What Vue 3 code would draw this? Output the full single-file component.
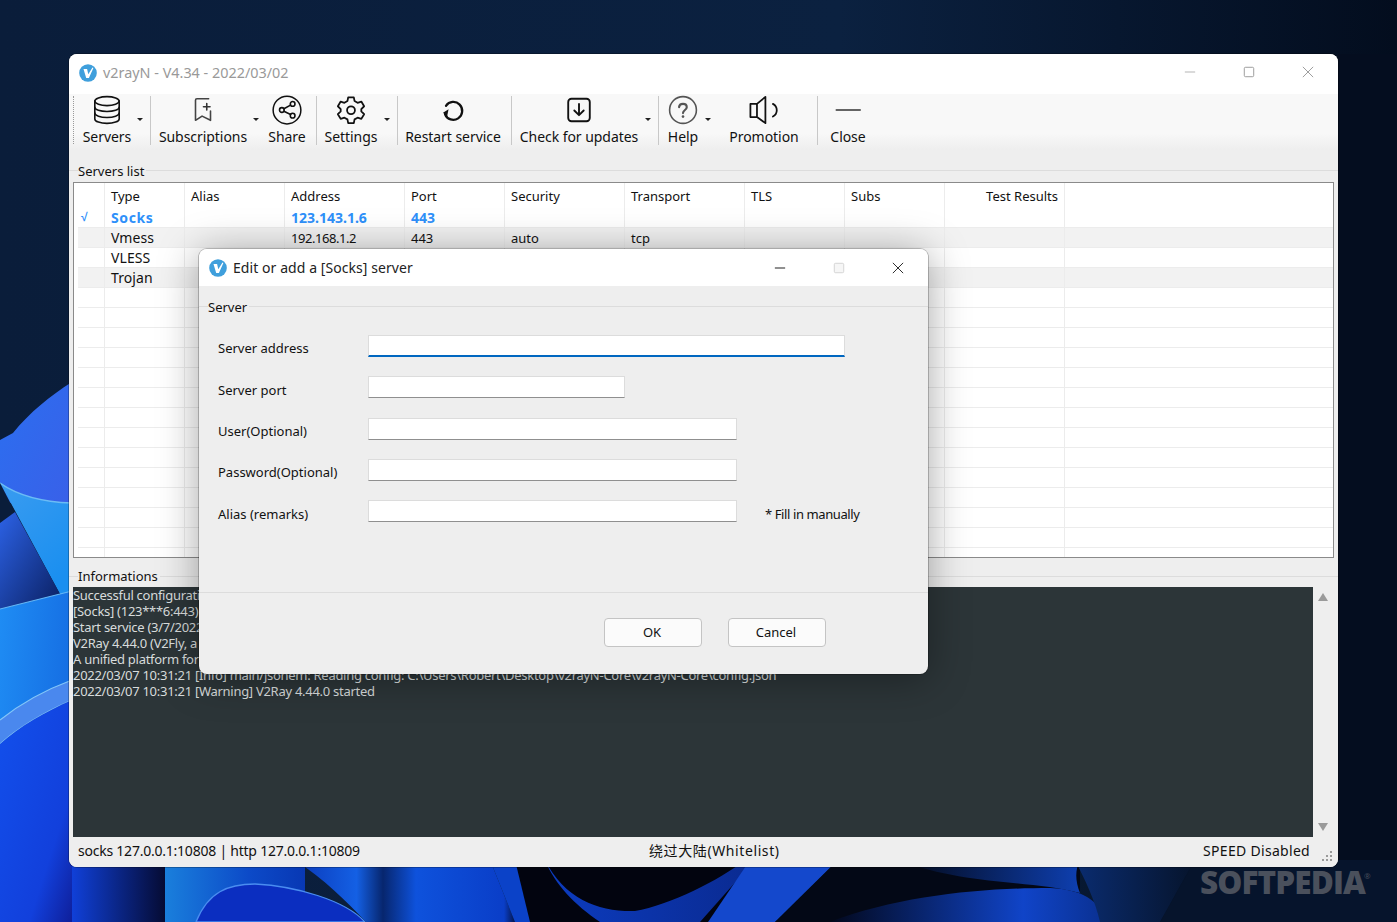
<script setup>
const tools = [
  { id: 'db', label: 'Servers', w: 73, pr: 13, caretR: 7, sep: true },
  { id: 'sub', label: 'Subscriptions', w: 111, pr: 7, caretR: 3 },
  { id: 'share', label: 'Share', w: 54, pr: 4, sep: true },
  { id: 'gear', label: 'Settings', w: 80, pr: 12, caretR: 7, sep: true },
  { id: 'restart', label: 'Restart service', w: 113, pr: 3, sep: true },
  { id: 'down', label: 'Check for updates', w: 146, pr: 12, caretR: 7, sep: true },
  { id: 'help', label: 'Help', w: 52, pr: 4, caretR: 0 },
  { id: 'promo', label: 'Promotion', w: 106, pr: 0, sep: true },
  { id: 'min', label: 'Close', w: 60, pr: 0 }
]
const columns = [
  { key: 'mark', label: '', w: 27 },
  { key: 'type', label: 'Type', w: 80 },
  { key: 'alias', label: 'Alias', w: 100 },
  { key: 'address', label: 'Address', w: 120 },
  { key: 'port', label: 'Port', w: 100 },
  { key: 'security', label: 'Security', w: 120 },
  { key: 'transport', label: 'Transport', w: 120 },
  { key: 'tls', label: 'TLS', w: 100 },
  { key: 'subs', label: 'Subs', w: 100 },
  { key: 'test', label: 'Test Results', w: 120, right: true },
  { key: 'rest', label: '', w: 268 }
]
const filled = [
  { mark: '√', type: 'Socks', address: '123.143.1.6', port: '443', active: true },
  { type: 'Vmess', address: '192.168.1.2', port: '443', security: 'auto', transport: 'tcp', alt: true },
  { type: 'VLESS' },
  { type: 'Trojan', alt: true }
]
const rows = [...filled, ...Array.from({ length: 14 }, () => ({}))]
const logs = [
  'Successful configuration',
  '[Socks] (123***6:443)',
  'Start service (3/7/2022 10:31:21 AM)',
  'V2Ray 4.44.0 (V2Fly, a community-driven edition of V2Ray.)',
  'A unified platform for anti-censorship.',
  '2022/03/07 10:31:21 [Info] main/jsonem: Reading config: C:\\Users\\Robert\\Desktop\\v2rayN-Core\\v2rayN-Core\\config.json',
  '2022/03/07 10:31:21 [Warning] V2Ray 4.44.0 started'
]
const fields = [
  { label: 'Server address', w: 477, focus: true, h: 41, low: false },
  { label: 'Server port', w: 257, h: 42, low: true },
  { label: 'User(Optional)', w: 369, h: 41, low: false },
  { label: 'Password(Optional)', w: 369, h: 41, low: false },
  { label: 'Alias (remarks)', w: 369, h: 42, low: true, note: '* Fill in manually' }
]
</script>

<template>
  <div class="desktop">
    <svg class="wall" viewBox="0 0 1397 922" preserveAspectRatio="none" aria-hidden="true">
      <defs>
        <linearGradient id="bg" x1="0" y1="0" x2="1" y2="0">
          <stop offset="0" stop-color="#0a1d3a" />
          <stop offset="0.6" stop-color="#0b2140" />
          <stop offset="1" stop-color="#030d1e" />
        </linearGradient>
        <linearGradient id="petalTop" x1="0" y1="0" x2="1" y2="1">
          <stop offset="0" stop-color="#2b6ff0" />
          <stop offset="1" stop-color="#3a5fe8" />
        </linearGradient>
        <linearGradient id="cyan" x1="0" y1="0" x2="0.6" y2="1">
          <stop offset="0" stop-color="#3a9cf0" />
          <stop offset="1" stop-color="#1a8ff0" />
        </linearGradient>
        <linearGradient id="fold" x1="0" y1="0" x2="1" y2="1">
          <stop offset="0" stop-color="#2c62e6" />
          <stop offset="1" stop-color="#0a1f60" />
        </linearGradient>
        <linearGradient id="lower" x1="0" y1="0" x2="1" y2="0.2">
          <stop offset="0" stop-color="#1f8df4" />
          <stop offset="1" stop-color="#1670e4" />
        </linearGradient>
        <linearGradient id="deep" x1="0" y1="0" x2="1" y2="1">
          <stop offset="0" stop-color="#1250ec" />
          <stop offset="0.7" stop-color="#1240dc" />
          <stop offset="1" stop-color="#0f1f9a" />
        </linearGradient>
        <linearGradient id="fadeL" x1="0" y1="0" x2="1" y2="0">
          <stop offset="0" stop-color="#1040d8" />
          <stop offset="1" stop-color="#050a30" />
        </linearGradient>
        <linearGradient id="stripe" x1="0" y1="0" x2="1" y2="0">
          <stop offset="0" stop-color="#1a7fdc" />
          <stop offset="0.6" stop-color="#0c4ac8" />
          <stop offset="1" stop-color="#0838b4" />
        </linearGradient>
        <linearGradient id="mid" x1="0" y1="0" x2="1" y2="0">
          <stop offset="0" stop-color="#0a38b8" />
          <stop offset="0.28" stop-color="#1460e4" />
          <stop offset="0.4" stop-color="#07266e" />
          <stop offset="0.55" stop-color="#0e52dc" />
          <stop offset="0.95" stop-color="#0a3ec8" />
          <stop offset="1" stop-color="#04154a" />
        </linearGradient>
        <linearGradient id="vband" x1="0" y1="0" x2="1" y2="0">
          <stop offset="0" stop-color="#0c3cc0" />
          <stop offset="1" stop-color="#0a2a90" />
        </linearGradient>
        <linearGradient id="sweep" x1="0" y1="0" x2="1" y2="0">
          <stop offset="0" stop-color="#02081c" />
          <stop offset="0.7" stop-color="#1044c8" />
          <stop offset="1" stop-color="#0a3090" />
        </linearGradient>
        <linearGradient id="upper" x1="0" y1="0" x2="1" y2="0">
          <stop offset="0" stop-color="#030816" />
          <stop offset="1" stop-color="#0e3fb0" />
        </linearGradient>
        <linearGradient id="after" x1="0" y1="0" x2="1" y2="0">
          <stop offset="0" stop-color="#0a2c70" />
          <stop offset="1" stop-color="#06142c" />
        </linearGradient>
      </defs>
      <rect width="1397" height="922" fill="url(#bg)" />
      <rect x="1338" y="54" width="59" height="868" fill="#040d1f" />
      <path d="M0 440 L13 433 C30 412 50 396 72 382 L72 520 L0 500 Z" fill="url(#petalTop)" />
      <path d="M0 483 C20 497 45 502 72 503 L72 595 L60 594 Z" fill="url(#cyan)" />
      <path d="M0 483 C20 497 45 502 72 503" fill="none" stroke="#6bbcf5" stroke-width="1.500" />
      <path d="M0 483 L15 512 L0 523 Z" fill="#0a1d3a" />
      <path d="M15 512 L60 594 L0 609 L0 523 Z" fill="url(#fold)" />
      <path d="M0 609 L72 591 L72 682 C45 692 20 706 0 722 Z" fill="url(#lower)" />
      <path d="M0 609 L72 591" stroke="#66b8f6" stroke-width="1.200" />
      <path d="M0 720 C20 704 45 690 72 680 L72 700 C45 712 20 726 0 744 Z" fill="#4a88ee" />
      <path d="M0 720 C20 704 45 690 72 680M0 744 C20 726 45 712 72 700" fill="none" stroke="#83c6f8" stroke-width="1.200" />
      <path d="M0 744 C20 726 45 712 72 700 L72 922 L0 922 Z" fill="url(#deep)" />

      <rect x="72" y="860" width="95" height="62" fill="url(#fadeL)" />
      <rect x="165" y="860" width="140" height="62" fill="url(#stripe)" />
      <path d="M196 922 C208 892 228 884 255 884 C295 886 345 900 365 922 Z" fill="#0b2ec0" stroke="#4a8df0" stroke-width="1.300" />
      <path d="M295 860 L490 860 L515 922 L366 922 C345 900 325 880 295 860 Z" fill="url(#mid)" />
      <path d="M490 860 L570 860 C585 895 610 922 640 922 L515 922 Z" fill="#0b42c8" />
      <path d="M515 860 L830 860 L775 922 L530 922 Z" fill="#02040f" />
      <path d="M545 860 C565 900 600 912 635 911 C670 905 720 880 745 860 L755 860 L700 922 L600 922 C575 905 555 885 545 860 Z" fill="url(#vband)" />
      <path d="M750 860 L838 860 L775 922 L708 922 Z" fill="#1448cc" />
      <path d="M838 860 L1080 860 L1080 922 L775 922 Z" fill="#030816" />
      <path d="M900 860 L1080 860 C1075 870 1075 880 1080 893 C1030 880 960 885 900 860 Z" fill="url(#upper)" />
      <path d="M830 922 C900 895 985 888 1050 888 C1090 890 1100 905 1106 922 Z" fill="url(#sweep)" />
      <path d="M1075 860 L1195 860 C1180 885 1170 905 1160 922 L1100 922 C1095 900 1085 880 1075 860 Z" fill="url(#after)" />
      <path d="M1195 860 L1397 860 L1397 922 L1160 922 Z" fill="#06142c" />
    </svg>

    <div class="window">
      <header class="titlebar">
        <svg class="logo" viewBox="0 0 20 20"><circle cx="10" cy="10" r="9.800" fill="#3f9fdc" /><path d="M5 5.500 L9 5.500 L10.300 11.500 L15 3.800 L16 4.500 L11 15.500 L8 15.500 Z" fill="#fff" /></svg>
        <span class="app-title">v2rayN - V4.34 - 2022/03/02</span>
        <div class="winctl">
          <svg viewBox="0 0 14 14" class="ctl"><path d="M1 7H13" stroke="#a8a8a8" stroke-width="1" /></svg>
          <svg viewBox="0 0 14 14" class="ctl"><rect x="1.500" y="1.500" width="11" height="11" rx="1.500" fill="none" stroke="#8e8e8e" /></svg>
          <svg viewBox="0 0 14 14" class="ctl"><path d="M1 1L13 13M13 1L1 13" stroke="#8e8e8e" stroke-width="1" /></svg>
        </div>
      </header>

      <nav class="toolbar">
        <div class="grip"></div>
        <template v-for="t in tools" :key="t.id">
          <div class="tool" :style="{ width: t.w + 'px', paddingRight: t.pr + 'px' }">
            <svg class="ticon" viewBox="0 0 32 32" fill="none" stroke="#111" stroke-width="1.700" stroke-linecap="round" stroke-linejoin="round">
              <g v-if="t.id === 'db'">
                <ellipse cx="16" cy="6.500" rx="13" ry="4.800" />
                <path d="M3 6.500V25.500C3 28.200 8.800 30.300 16 30.300S29 28.200 29 25.500V6.500" />
                <path d="M3 13C3 15.700 8.800 17.600 16 17.600S29 15.700 29 13" />
                <path d="M3 19.300C3 22 8.800 24 16 24S29 22 29 19.300" />
              </g>
              <g v-else-if="t.id === 'sub'">
                <path d="M22 4H9.500C8.500 4 8 4.600 8 5.500V27L15 22.500L24 27V17" stroke="#444" />
                <path d="M20 9V16M16.500 12.500H23.500" stroke="#333" />
              </g>
              <g v-else-if="t.id === 'share'">
                <circle cx="16" cy="16" r="14.800" stroke-width="1.600" />
                <circle cx="22" cy="9.500" r="2.500" />
                <circle cx="10.500" cy="16" r="2.500" />
                <circle cx="22" cy="22" r="2.500" />
                <path d="M12.700 14.700L19.800 10.800M12.700 17.300L19.800 20.800" />
              </g>
              <g v-else-if="t.id === 'gear'">
                <path d="M13 2.500H19L19.800 6.500L23 8.300L27 7L30 12L27 15L27 17.500L30 20.500L27 25.500L23 24.200L19.800 26L19 30H13L12.200 26L9 24.200L5 25.500L2 20.500L5 17.500L5 15L2 12L5 7L9 8.300L12.200 6.500Z" stroke-width="1.900" />
                <circle cx="16" cy="16.300" r="4.200" stroke-width="1.900" />
              </g>
              <g v-else-if="t.id === 'restart'">
                <path d="M8.500 11.500A9.500 9.500 0 1 1 7.500 20.500" stroke-width="2.400" />
                <path d="M5.800 17.500L12.800 17.800L7 23.300Z" fill="#111" stroke="none" transform="rotate(-35 8 19)" />
              </g>
              <g v-else-if="t.id === 'down'">
                <rect x="4.500" y="4" width="23" height="24" rx="3.500" stroke-width="2" />
                <path d="M16 9.500V21M11 16.500L16 21.500L21 16.500" stroke-width="2" />
              </g>
              <g v-else-if="t.id === 'help'">
                <circle cx="16" cy="16" r="14.300" stroke="#555" stroke-width="1.700" />
                <path d="M11.800 13C12 10.500 13.700 9.500 16 9.500C18.500 9.500 20 11 20 13C20 16 16 16 16 19.300" stroke="#555" stroke-width="2.300" />
                <circle cx="16" cy="23" r="1.400" fill="#555" stroke="none" />
              </g>
              <g v-else-if="t.id === 'promo'">
                <path d="M1.500 9.500H8.500V23.500H1.500ZM8.500 9.500L17.500 2V30L8.500 23.500" stroke-width="1.900" />
                <path d="M25.500 9.500C31 12.500 31 20 25.500 23" stroke-width="1.900" />
              </g>
              <g v-else>
                <path d="M3.500 16H29" stroke="#333" stroke-width="1.700" />
              </g>
            </svg>
            <span class="tlabel">{{ t.label }}</span>
            <i v-if="t.caretR !== undefined" class="caret" :style="{ right: t.caretR + 'px' }"></i>
          </div>
          <div v-if="t.sep" class="tsep"></div>
        </template>
      </nav>

      <section class="servers">
        <div class="legend">Servers list</div>
        <div class="table">
          <div class="tr head">
            <div v-for="c in columns" :key="c.key" class="th" :class="{ right: c.right }" :style="{ width: c.w + 'px' }">{{ c.label }}</div>
          </div>
          <div v-for="(r, i) in rows" :key="i" class="tr" :class="{ alt: r.alt, active: r.active }">
            <div v-for="c in columns" :key="c.key" class="td" :class="'c-' + c.key" :style="{ width: c.w + 'px' }">{{ r[c.key] }}</div>
          </div>
        </div>
      </section>

      <section class="info">
        <div class="legend info-legend">Informations</div>
        <div class="logbox">
          <div class="log">
            <div v-for="l in logs" :key="l" class="logline">{{ l }}</div>
          </div>
          <div class="scroll">
            <i class="up"></i>
            <i class="dn"></i>
          </div>
        </div>
      </section>

      <footer class="status">
        <span class="s1">socks 127.0.0.1:10808 | http 127.0.0.1:10809</span>
        <span class="s2">绕过大陆(Whitelist)</span>
        <span class="s3">SPEED Disabled</span>
        <svg class="sgrip" viewBox="0 0 12 12"><g fill="#9a9a9a"><rect x="9" y="1" width="2" height="2" /><rect x="5" y="5" width="2" height="2" /><rect x="9" y="5" width="2" height="2" /><rect x="1" y="9" width="2" height="2" /><rect x="5" y="9" width="2" height="2" /><rect x="9" y="9" width="2" height="2" /></g></svg>
      </footer>
    </div>

    <div class="dialog">
      <header class="dtitle">
        <svg class="dlogo" viewBox="0 0 20 20"><circle cx="10" cy="10" r="9.800" fill="#3f9fdc" /><path d="M5 5.500 L9 5.500 L10.300 11.500 L15 3.800 L16 4.500 L11 15.500 L8 15.500 Z" fill="#fff" /></svg>
        <span class="dname">Edit or add a [Socks] server</span>
        <div class="dctl">
          <svg viewBox="0 0 14 14" class="ctl"><path d="M1 7H13" stroke="#222" stroke-width="1.200" /></svg>
          <svg viewBox="0 0 14 14" class="ctl"><rect x="1.500" y="1.500" width="11" height="11" rx="1.500" fill="#f6f6f6" stroke="#cfcfcf" /></svg>
          <svg viewBox="0 0 14 14" class="ctl"><path d="M1 1L13 13M13 1L1 13" stroke="#222" stroke-width="1.100" /></svg>
        </div>
      </header>
      <div class="dbody">
        <div class="dlegend">Server</div>
        <div class="form">
          <div v-for="f in fields" :key="f.label" class="frow" :style="{ height: f.h + 'px' }">
            <label class="flabel" :class="{ low: f.low }">{{ f.label }}</label>
            <div class="finput" :class="{ focus: f.focus }" :style="{ width: f.w + 'px' }"></div>
            <span v-if="f.note" class="fnote">{{ f.note }}</span>
          </div>
        </div>
      </div>
      <footer class="dfoot">
        <button class="btn">OK</button>
        <button class="btn">Cancel</button>
      </footer>
    </div>

    <div class="watermark">SOFTPEDIA<span class="reg">®</span></div>
  </div>
</template>

<style>
html, body { margin: 0; padding: 0; background: #020d1f; }
</style>

<style scoped>
.desktop {
  position: relative;
  width: 1397px;
  height: 922px;
  overflow: hidden;
  font-family: "Noto Sans", "Noto Sans CJK SC", sans-serif;
  color: #111;
}
.wall { position: absolute; inset: 0; width: 100%; height: 100%; }

.window {
  position: absolute;
  left: 69px;
  top: 54px;
  width: 1269px;
  height: 813px;
  display: flex;
  flex-direction: column;
  background: #eeeeee;
  border-radius: 8px;
  overflow: hidden;
  box-shadow: 0 0 0 1px rgba(0, 0, 0, .25);
}
.titlebar {
  height: 40px;
  flex: none;
  display: flex;
  align-items: center;
  background: #fff;
  padding-left: 10px;
}
.logo { width: 18px; height: 18px; margin-top: -3px; }
.app-title { margin-left: 6px; font-size: 14.400px; color: #999; margin-top: -4px; }
.winctl { margin-left: auto; display: flex; gap: 47px; padding-right: 24px; margin-top: -4px; }
.ctl { width: 12px; height: 12px; display: block; }

.toolbar {
  height: 56px;
  flex: none;
  display: flex;
  align-items: stretch;
  background: linear-gradient(#f8f8f8, #f8f8f8 70%, #eeeeee);
  padding-left: 4px;
}
.grip {
  width: 0;
  margin: 2px 3px 6px 0;
  border-left: 1px dotted #9a9a9a;
}
.tool { position: relative; flex: none; box-sizing: border-box; display: flex; flex-direction: column; align-items: center; padding-top: 1px; }
.ticon { width: 30px; height: 30px; flex: none; }
.tlabel { font-size: 14px; line-height: 20px; margin-top: 2px; white-space: nowrap; letter-spacing: -.05px; }
.caret {
  position: absolute;
  top: 24px;
  border: 3px solid transparent;
  border-top-color: #222;
  border-bottom: 0;
}
.tsep { flex: none; width: 1px; margin: 2px 0 5px 0; background: #c8c8c8; }

.servers { position: relative; flex: none; height: 411px; padding: 32px 4px 0 4px; box-sizing: border-box; }
.legend {
  position: absolute;
  left: 9px;
  top: 12px;
  font-size: 13px;
  line-height: 18px;
  background: #eeeeee;
  padding-right: 2px;
}
.servers::before {
  content: "";
  position: absolute;
  left: 0;
  right: 0;
  top: 20px;
  border-top: 1px solid #dcdcdc;
}
.table {
  height: 376px;
  border: 1px solid #8a8a8a;
  background: #fff;
  overflow: hidden;
  box-sizing: border-box;
}
.tr { display: flex; height: 20px; margin-left: 4px; border-bottom: 1px solid #ececec; box-sizing: border-box; font-size: 13px; }
.tr.head { height: 25px; border-bottom: 0; }
.th, .td { flex: none; box-sizing: border-box; border-right: 1px solid #ececec; padding-left: 6px; line-height: 21px; white-space: nowrap; overflow: hidden; }
.th:last-child, .td:last-child { border-right: 0; }
.th { line-height: 26px; font-size: 13px; }
.th.right { text-align: right; padding-right: 6px; }
.tr.alt { background: #f2f2f2; }
.c-type { font-size: 14px; letter-spacing: .1px; line-height: 19px; }
.c-address { letter-spacing: -.45px; }
.tr.active { color: #2e90fa; font-weight: 700; font-size: 14px; }
.tr.active .td { line-height: 19px; }
.tr.active .c-address { letter-spacing: 0; }
.tr.active .c-type { letter-spacing: .6px; }
.c-mark { font-family: "Liberation Sans", sans-serif; font-size: 12px; padding-left: 3px; }

.info { position: relative; flex: none; height: 276px; padding-top: 26px; box-sizing: border-box; }
.info::before {
  content: "";
  position: absolute;
  left: 0;
  right: 0;
  top: 15px;
  border-top: 1px solid #dcdcdc;
}
.info-legend { top: 6px; }
.logbox { display: flex; height: 250px; padding-left: 4px; }
.log {
  flex: 1;
  background: #2c3538;
  color: #d8dcdc;
  font-size: 13px;
  line-height: 16px;
  overflow: hidden;
}
.logline { white-space: nowrap; letter-spacing: -.28px; }
.scroll { flex: none; width: 21px; position: relative; background: #eeeeee; margin-right: 4px; }
.up, .dn { position: absolute; left: 5px; border: 5px solid transparent; }
.up { top: 6px; border-bottom: 8px solid #9a9a9a; border-top: 0; }
.dn { bottom: 6px; border-top: 8px solid #9a9a9a; border-bottom: 0; }

.status {
  position: relative;
  flex: none;
  height: 30px;
  padding-bottom: 4px;
  box-sizing: border-box;
  display: flex;
  align-items: center;
  font-size: 14px;
  background: #eeeeee;
}
.s1 { margin-left: 9px; letter-spacing: -.23px; }
.s2 { position: absolute; left: 580px; letter-spacing: .6px; }
.s3 { position: absolute; right: 28px; letter-spacing: .3px; }
.sgrip { position: absolute; right: 5px; bottom: 5px; width: 12px; height: 12px; }

.dialog {
  position: absolute;
  left: 199px;
  top: 249px;
  width: 729px;
  height: 425px;
  display: flex;
  flex-direction: column;
  background: #eeeeee;
  border-radius: 8px;
  overflow: hidden;
  box-shadow: 0 0 0 1px rgba(0, 0, 0, .22), 0 4px 40px rgba(0, 0, 0, .36);
}
.dtitle { height: 37px; flex: none; display: flex; align-items: center; background: #fff; padding-left: 10px; }
.dlogo { width: 18px; height: 18px; }
.dname { margin-left: 6px; font-size: 14px; color: #222; letter-spacing: .07px; }
.dctl { margin-left: auto; display: flex; gap: 47px; padding-right: 24px; }
.dbody { position: relative; flex: none; height: 307px; box-sizing: border-box; border-bottom: 1px solid #dcdcdc; }
.dbody::before {
  content: "";
  position: absolute;
  left: 0;
  right: 0;
  top: 20px;
  border-top: 1px solid #dcdcdc;
}
.dlegend {
  position: absolute;
  left: 9px;
  top: 12px;
  font-size: 13px;
  line-height: 18px;
  background: #eeeeee;
  padding-right: 2px;
}
.form { padding: 49px 0 0 19px; }
.frow { display: flex; align-items: flex-start; }
.flabel { width: 150px; font-size: 13px; line-height: 22px; margin-top: 2px; flex: none; }
.flabel.low { margin-top: 3px; }
.finput {
  height: 22px;
  box-sizing: border-box;
  background: #fff;
  border: 1px solid #dcdcdc;
  border-bottom-color: #8f8f8f;
}
.finput.focus { border-bottom: 2px solid #0067c0; }
.fnote { margin-left: 28px; margin-top: 3px; font-size: 13px; line-height: 22px; letter-spacing: -.4px; }
.dfoot { flex: 1; display: flex; justify-content: flex-end; align-items: flex-start; gap: 26px; padding: 25px 102px 0 0; box-sizing: border-box; }
.btn {
  width: 98px;
  height: 29px;
  box-sizing: border-box;
  border: 1px solid #c4c4c4;
  border-radius: 4px;
  background: #fbfbfb;
  font: 13px "Noto Sans", sans-serif;
  color: #111;
  padding: 0 2px 2px 0;
}

.watermark {
  position: absolute;
  left: 1200px;
  top: 862px;
  font: 800 31.500px/40px "Open Sans", sans-serif;
  color: #4a505c;
  letter-spacing: -.9px;
}
.reg { position: absolute; left: 164px; top: -6px; font-size: 8px; font-weight: 400; letter-spacing: 0; }
</style>
